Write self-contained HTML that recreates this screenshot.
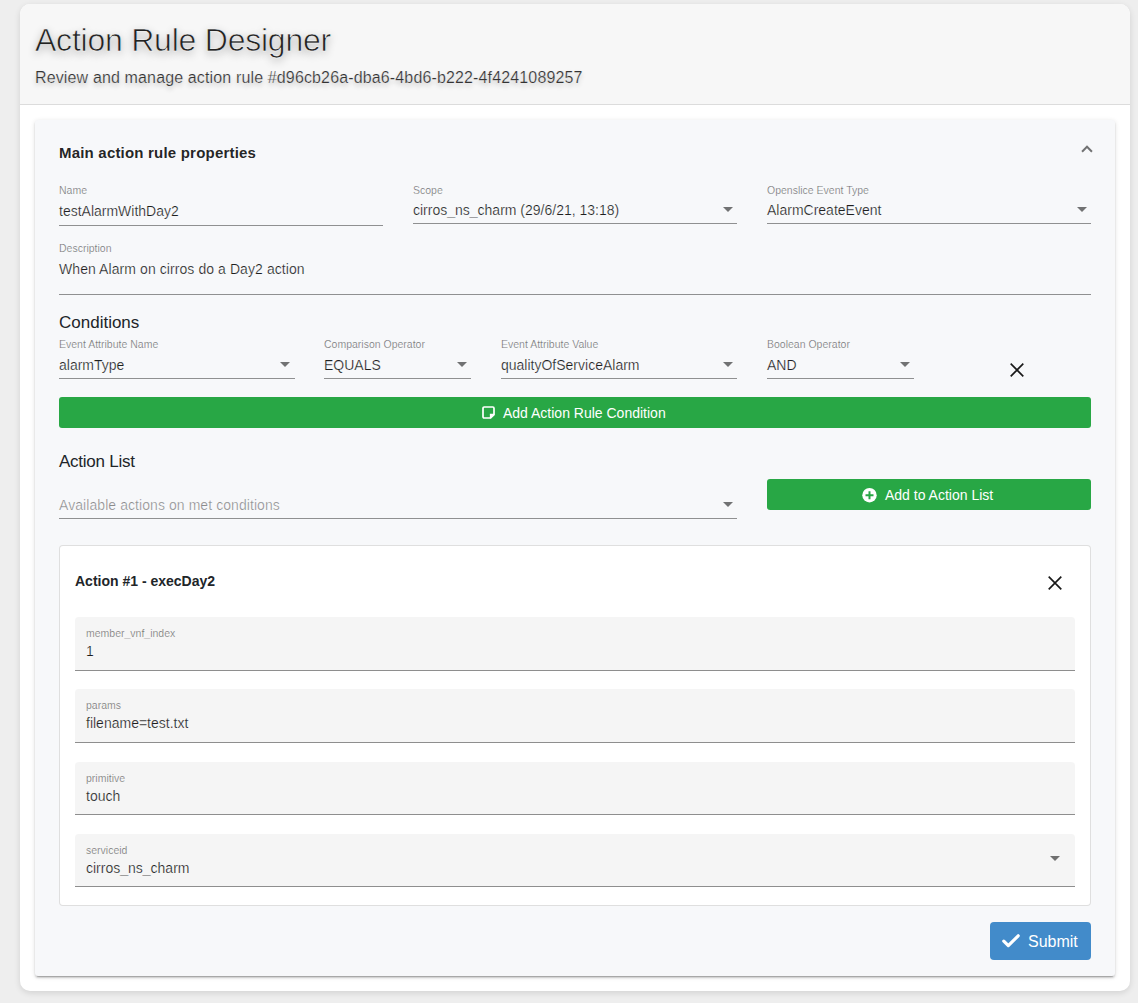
<!DOCTYPE html>
<html><head><meta charset="utf-8">
<style>
*{box-sizing:border-box;margin:0;padding:0}
html,body{width:1138px;height:1003px;overflow:hidden;background:#eeeeee;font-family:"Liberation Sans",sans-serif;color:rgba(0,0,0,.87)}
.a{position:absolute}
#outer{left:20px;top:4px;width:1110px;height:987px;border-radius:10px;background:#fff;box-shadow:0 2px 6px rgba(0,0,0,.12);overflow:hidden}
#hdr{left:0;top:0;width:1110px;height:101px;background:#f7f7f7;border-bottom:1px solid #dcdcdc}
#panel{left:35px;top:120px;width:1080px;height:856px;background:#f7f8fa;border-radius:3px;box-shadow:0 3px 1px -2px rgba(0,0,0,.2),0 2px 2px 0 rgba(0,0,0,.14),0 1px 5px 0 rgba(0,0,0,.12)}
.t{position:absolute;white-space:nowrap;line-height:1;margin-top:-1px}
.lbl{font-size:10.5px;color:rgba(0,0,0,.54)}
.val{font-size:14px;color:rgba(0,0,0,.9);-webkit-text-stroke:0.22px #f7f8fa}
.fv{-webkit-text-stroke-color:#f5f5f5}
.lbl{-webkit-text-stroke:0.15px #f7f8fa}
.fl{-webkit-text-stroke-color:#f5f5f5}
.ul{position:absolute;height:1px;background:rgba(0,0,0,.42)}
.arr{position:absolute;width:0;height:0;border-left:5px solid transparent;border-right:5px solid transparent;border-top:5px solid rgba(0,0,0,.54)}
.btn-g{position:absolute;background:#28a745;border-radius:3px;color:#fff}
.fill{position:absolute;left:75px;width:1000px;height:54px;background:#f5f5f5;border-radius:4px 4px 0 0;border-bottom:1px solid rgba(0,0,0,.42)}
</style></head><body>
<div id="outer" class="a">
  <div id="hdr" class="a"></div>
</div>
<div class="t" style="left:35px;top:25px;font-size:32px;letter-spacing:-0.23px;color:#222;-webkit-text-stroke:0.6px #f7f7f7;text-shadow:0 3px 8px rgba(0,0,0,.3)">Action Rule Designer</div>
<div class="t" style="left:35px;top:71px;font-size:16px;letter-spacing:0.14px;color:#333;-webkit-text-stroke:0.2px #f7f7f7;text-shadow:0 3px 5px rgba(0,0,0,.2)">Review and manage action rule #d96cb26a-dba6-4bd6-b222-4f4241089257</div>

<div id="panel" class="a"></div>
<div class="t" style="left:59px;top:146px;font-size:15px;font-weight:bold;letter-spacing:0.2px;color:rgba(0,0,0,.87)">Main action rule properties</div>
<!-- chevron -->
<div class="a" style="left:1083px;top:146.5px;width:8px;height:8px;border-style:solid;border-color:rgba(0,0,0,.54);border-width:2px 0 0 2px;transform:rotate(45deg)"></div>

<!-- row 1 -->
<div class="t lbl" style="left:59px;top:186px">Name</div>
<div class="t val" style="left:59px;top:205px">testAlarmWithDay2</div>
<div class="ul" style="left:59px;top:225px;width:324px"></div>

<div class="t lbl" style="left:413px;top:186px">Scope</div>
<div class="t val" style="left:413px;top:204px">cirros_ns_charm (29/6/21, 13:18)</div>
<div class="ul" style="left:413px;top:223px;width:324px"></div>
<div class="arr" style="left:723px;top:207px"></div>

<div class="t lbl" style="left:767px;top:186px">Openslice Event Type</div>
<div class="t val" style="left:767px;top:204px">AlarmCreateEvent</div>
<div class="ul" style="left:767px;top:223px;width:324px"></div>
<div class="arr" style="left:1077px;top:207px"></div>

<div class="t lbl" style="left:59px;top:244px">Description</div>
<div class="t val" style="left:59px;top:263px;letter-spacing:0.08px">When Alarm on cirros do a Day2 action</div>
<div class="ul" style="left:59px;top:294px;width:1032px"></div>

<div class="t" style="left:59px;top:315px;font-size:17px;color:#212529">Conditions</div>

<div class="t lbl" style="left:59px;top:340px">Event Attribute Name</div>
<div class="t val" style="left:59px;top:359px">alarmType</div>
<div class="ul" style="left:59px;top:378px;width:236px"></div>
<div class="arr" style="left:280px;top:362px"></div>

<div class="t lbl" style="left:324px;top:340px">Comparison Operator</div>
<div class="t val" style="left:324px;top:359px">EQUALS</div>
<div class="ul" style="left:324px;top:378px;width:147px"></div>
<div class="arr" style="left:457px;top:362px"></div>

<div class="t lbl" style="left:501px;top:340px">Event Attribute Value</div>
<div class="t val" style="left:501px;top:359px">qualityOfServiceAlarm</div>
<div class="ul" style="left:501px;top:378px;width:236px"></div>
<div class="arr" style="left:723px;top:362px"></div>

<div class="t lbl" style="left:767px;top:340px">Boolean Operator</div>
<div class="t val" style="left:767px;top:359px">AND</div>
<div class="ul" style="left:767px;top:378px;width:147px"></div>
<div class="arr" style="left:900px;top:362px"></div>

<svg class="a" style="left:1005px;top:358px" width="24" height="24" viewBox="0 0 24 24"><path d="M5.7 5.7L18.3 18.3M18.3 5.7L5.7 18.3" stroke="rgba(0,0,0,.9)" stroke-width="1.65"/></svg>

<div class="btn-g" style="left:59px;top:397px;width:1032px;height:31px"></div>
<svg class="a" style="left:482px;top:406px" width="13" height="13" viewBox="0 0 13 13"><path d="M2.2 1H10.8Q12 1 12 2.2V8.6L8.6 12H2.2Q1 12 1 10.8V2.2Q1 1 2.2 1Z" fill="none" stroke="#fff" stroke-width="1.7"/><path d="M8.5 12.2V8.5H12.2" fill="none" stroke="#fff" stroke-width="1.3"/><path d="M8.5 8.5H12L8.5 12Z" fill="#fff"/></svg>
<div class="t" style="left:503px;top:407px;font-size:14px;color:#fff">Add Action Rule Condition</div>

<div class="t" style="left:59px;top:454px;font-size:17px;letter-spacing:-0.25px;color:#212529">Action List</div>
<div class="t val" style="left:59px;top:499px;letter-spacing:0.07px;color:rgba(0,0,0,.45)">Available actions on met conditions</div>
<div class="ul" style="left:59px;top:518px;width:678px"></div>
<div class="arr" style="left:723px;top:502px"></div>

<div class="btn-g" style="left:767px;top:479px;width:324px;height:31px"></div>
<svg class="a" style="left:862px;top:487.6px" width="15" height="15" viewBox="0 0 15 15"><circle cx="7.5" cy="7.2" r="7.2" fill="#fff"/><path d="M7.5 3.2V11.2M3.5 7.2H11.5" stroke="#28a745" stroke-width="2"/></svg>
<div class="t" style="left:885px;top:489px;font-size:14px;color:#fff">Add to Action List</div>

<div class="a" style="left:59px;top:545px;width:1032px;height:361px;background:#fff;border:1px solid rgba(0,0,0,.125);border-radius:4px"></div>
<div class="t" style="left:75px;top:575px;font-size:14px;font-weight:bold;color:#212529">Action #1 - execDay2</div>
<svg class="a" style="left:1042.5px;top:571px" width="24" height="24" viewBox="0 0 24 24"><path d="M5.7 5.7L18.3 18.3M18.3 5.7L5.7 18.3" stroke="rgba(0,0,0,.9)" stroke-width="1.65"/></svg>

<div class="fill" style="top:617px"></div>
<div class="t lbl fl" style="left:86px;top:629px">member_vnf_index</div>
<div class="t val fv" style="left:86px;top:645px">1</div>
<div class="fill" style="top:689px"></div>
<div class="t lbl fl" style="left:86px;top:701px">params</div>
<div class="t val fv" style="left:86px;top:717px">filename=test.txt</div>
<div class="fill" style="top:762px;height:53px"></div>
<div class="t lbl fl" style="left:86px;top:774px">primitive</div>
<div class="t val fv" style="left:86px;top:790px">touch</div>
<div class="fill" style="top:834px;height:53px"></div>
<div class="t lbl fl" style="left:86px;top:846px">serviceid</div>
<div class="t val fv" style="left:86px;top:862px">cirros_ns_charm</div>
<div class="arr" style="left:1050px;top:856px"></div>

<div class="a" style="left:990px;top:922px;width:101px;height:38px;background:#428bca;border-radius:4px"></div>
<svg class="a" style="left:1002px;top:934px" width="18" height="14" viewBox="0 0 18 14"><path d="M1.8 7.2L6.3 11.6L16.2 1.8" fill="none" stroke="#fff" stroke-width="3.2" stroke-linecap="round" stroke-linejoin="round"/></svg>
<div class="t" style="left:1028px;top:935px;font-size:16px;color:#fff">Submit</div>
</body></html>
